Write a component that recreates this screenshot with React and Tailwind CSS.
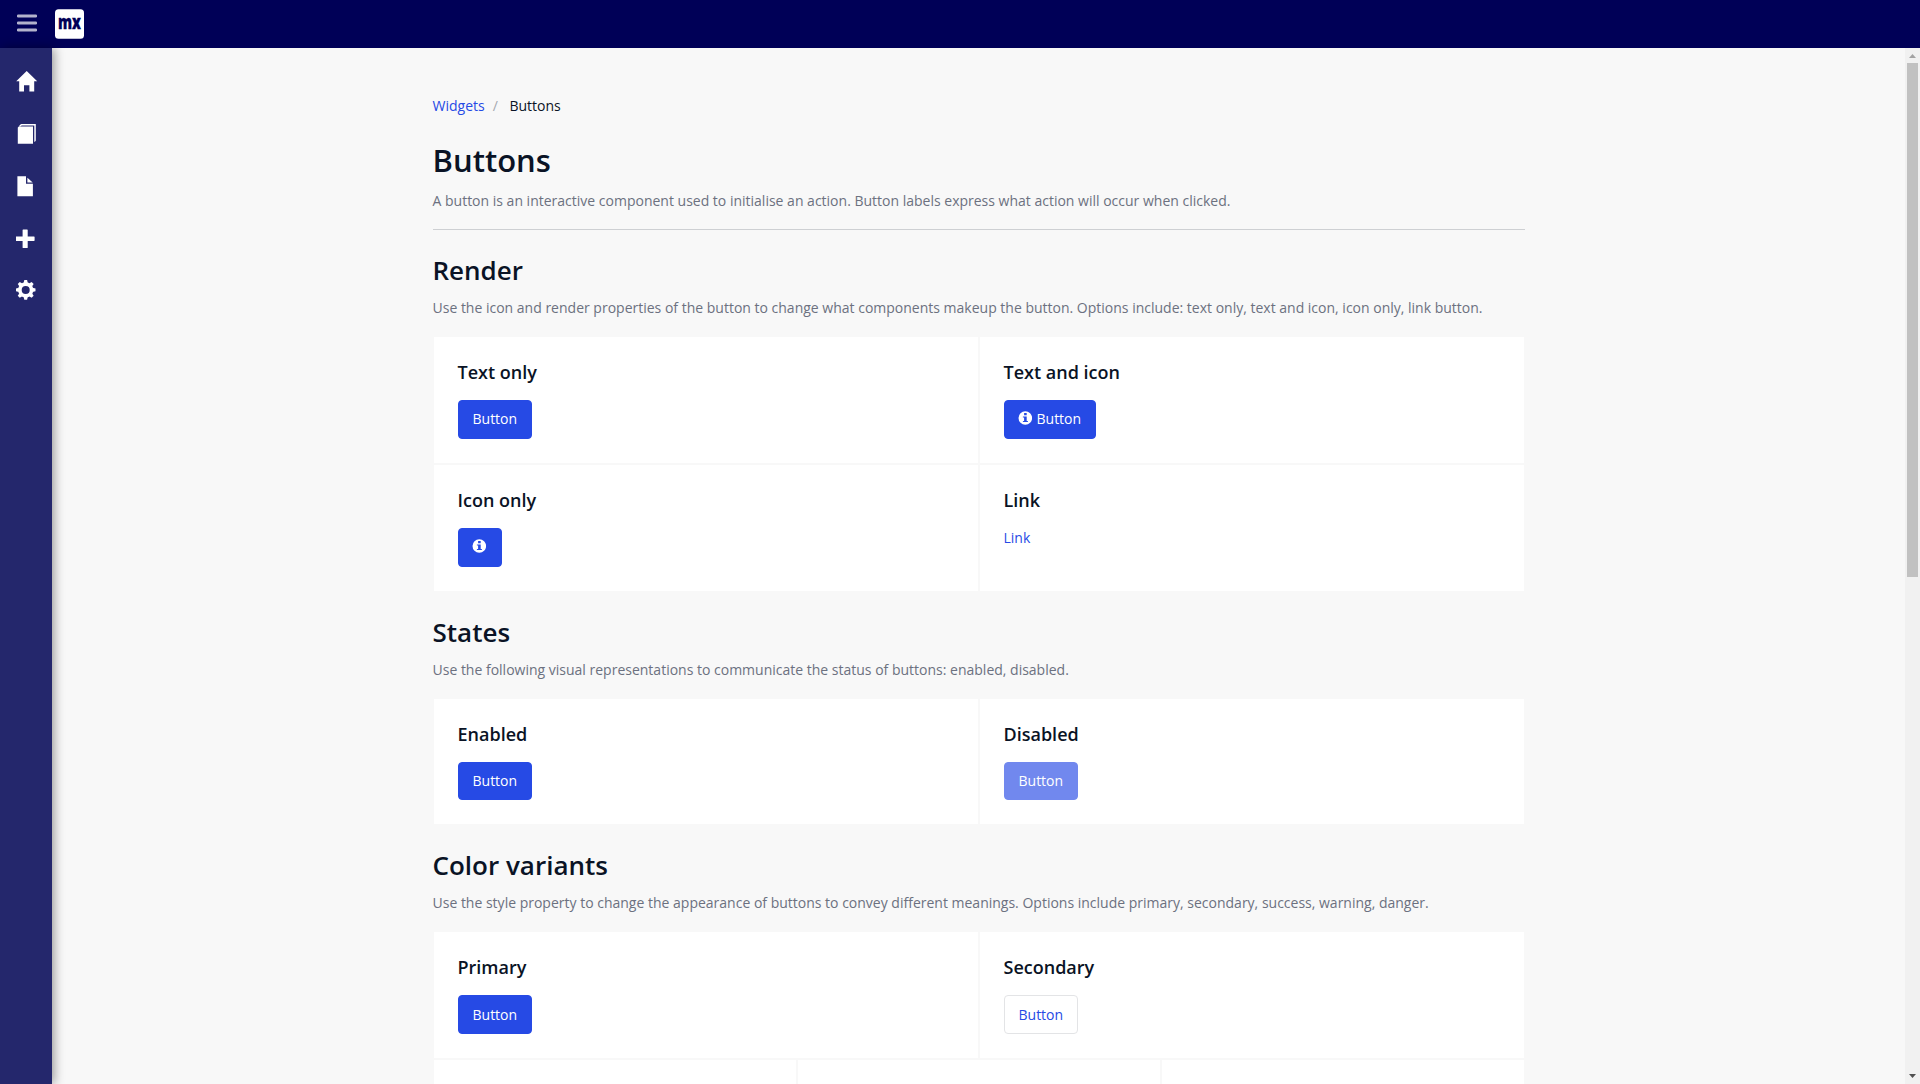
const navIcons = [
  {
    name: "Home",
    draw: <path d="M10.7 1 L21.2 11.3 H18.2 V21.5 H13.4 V15.3 H8 V21.5 H3.2 V11.3 H0.2 Z" />,
  },
  {
    name: "Book",
    draw: (
      <>
        <path d="M1.8 5.6 L3 4.5 H17 V21.7 H1.8 Z" />
        <path d="M2.6 4.6 L4.2 2.7 Q4.7 2.1 5.4 2.1 H19.8 V18.6 Q19.7 19.4 18.3 19.9 V3.4 H5.6 L4.5 4.6 Z" />
      </>
    ),
  },
  {
    name: "File",
    draw: (
      <>
        <path d="M1.4 1.3 H10 V8.8 H16.9 V21.3 H1.4 Z" />
        <path d="M11.4 2.8 L16.7 7.4 H11.4 Z" />
      </>
    ),
  },
  {
    name: "Add",
    draw: (
      <path d="M7.2 2.5 h3.9 q0.6 0 0.6 0.6 V9.4 H18 q0.6 0 0.6 0.6 v3.3 q0 0.6 -0.6 0.6 H11.7 V20.4 q0 0.6 -0.6 0.6 H7.2 q-0.6 0 -0.6 -0.6 V13.9 H0 V9.4 H6.6 V3.1 q0 -0.6 0.6 -0.6 Z" />
    ),
  },
  {
    name: "Settings",
    draw: (
      <g transform="translate(9.7 10.9)">
        <circle r="5.8" fill="none" stroke="currentColor" strokeWidth="3.6" />
        {[0, 45, 90, 135, 180, 225, 270, 315].map((a) => (
          <path key={a} transform={`rotate(${a})`} d="M-2.1 -6.8 L-1.4 -9.8 H1.4 L2.1 -6.8 Z" />
        ))}
      </g>
    ),
  },
];

function InfoIcon() {
  return (
    <svg
      viewBox="-0.3 0 14 14"
      className="-ml-[0.5px] mr-[0.5px] mb-[2.3px] block h-[14px] w-[14px] shrink-0"
      fill="currentColor"
    >
      <path
        fillRule="evenodd"
        d="M7 0.2a6.8 6.8 0 1 1 0 13.6A6.8 6.8 0 0 1 7 0.2ZM5.8 2.1v2.1h2.6V2.1ZM4.6 5.4v1h1.2v3.5H4.6v1.2h5V9.9H8.4V5.4Z"
      />
    </svg>
  );
}

function Button({ kind = "primary", children }) {
  const kinds = {
    primary: "border-[#264ae5] bg-[#264ae5] text-white",
    disabled: "border-[#264ae5] bg-[#264ae5] text-white opacity-65",
    secondary: "border-[#e3e4e6] bg-white text-[#264ae5]",
  };
  return (
    <button
      type="button"
      className={
        "flex h-[38.65px] items-center gap-1 rounded-[4px] border px-[14px] pb-[0.19px] text-sm leading-5 " + kinds[kind]
      }
    >
      {children}
    </button>
  );
}

function Cell({ title, children }) {
  return (
    <div className="flex h-[127.65px] flex-col items-start border border-[#f8f8f8] bg-white p-6">
      <h4 className="mb-[15.6px] text-lg font-semibold leading-[23.4px]">{title}</h4>
      {children}
    </div>
  );
}

function Section({ title, description, children }) {
  return (
    <section className="flex flex-col">
      <h2 className="mb-[9.4px] mt-6 text-[26px] font-semibold leading-[33.8px]">{title}</h2>
      <p className="mb-[16.95px] text-sm leading-[22px] text-[#6c7180]">{description}</p>
      {children}
    </section>
  );
}

export default function App() {
  return (
    <div className="flex h-[1084px] flex-col overflow-hidden bg-[#f8f8f8] font-['Open_Sans',sans-serif] text-sm text-[#0a1325]">
      <header className="flex h-12 shrink-0 items-center bg-[#000057]">
        <svg viewBox="0 0 20 48" className="ml-[17px] h-12 w-5" fill="#b2b2cc">
          <rect y="14.4" width="20" height="3.1" rx="1.2" />
          <rect y="21.4" width="20" height="3.1" rx="1.2" />
          <rect y="28.4" width="20" height="3.1" rx="1.2" />
        </svg>
        <svg viewBox="0 0 29 48" className="ml-[18px] h-12 w-[29px] overflow-visible">
          <rect y="9.2" width="29" height="29.5" rx="3.5" fill="#fff" />
          <text
            x="3"
            y="29.3"
            textLength="23"
            lengthAdjust="spacingAndGlyphs"
            fontFamily="Open Sans"
            fontWeight="800"
            fontSize="20"
            fill="#000057"
            stroke="#000057"
            strokeWidth="0.3"
          >
            mx
          </text>
        </svg>
      </header>
      <div className="flex min-h-0 flex-1">
        <nav className="z-10 flex w-[52px] shrink-0 flex-col gap-[30.3px] bg-[#24276c] pl-4 pt-[22px] text-white shadow-[2px_0_10px_rgba(0,0,0,0.4)]">
          {navIcons.map((item) => (
            <svg key={item.name} viewBox="0 0 22 22" className="h-[22px] w-[22px] shrink-0" fill="currentColor">
              {item.draw}
            </svg>
          ))}
        </nav>
        <main className="flex min-w-0 flex-1 justify-center overflow-hidden">
          <div className="w-[1092px]">
            <div className="mt-[47px] flex h-[22px] leading-[22px]">
              <span className="text-[#264ae5]">Widgets</span>
              <span className="ml-2 text-[#a5a8b0]">/</span>
              <span className="ml-[11.6px]">Buttons</span>
            </div>
            <h1 className="mt-[23px] text-[31px] font-semibold leading-[40px]">Buttons</h1>
            <p className="mt-2.5 leading-[22px] text-[#6c7180]">
              A button is an interactive component used to initialise an action. Button labels express what action will
              occur when clicked.
            </p>
            <div className="mb-[0.1px] mt-[17px] h-px bg-[#ced0d3]" />
            <Section
              title="Render"
              description="Use the icon and render properties of the button to change what components makeup the button. Options include: text only, text and icon, icon only, link button."
            >
              <div className="grid grid-cols-2">
                <Cell title="Text only">
                  <Button>Button</Button>
                </Cell>
                <Cell title="Text and icon">
                  <Button>
                    <InfoIcon />
                    Button
                  </Button>
                </Cell>
                <Cell title="Icon only">
                  <Button>
                    <InfoIcon />
                  </Button>
                </Cell>
                <Cell title="Link">
                  <span className="leading-5 text-[#264ae5]">Link</span>
                </Cell>
              </div>
            </Section>
            <Section
              title="States"
              description="Use the following visual representations to communicate the status of buttons: enabled, disabled."
            >
              <div className="grid grid-cols-2">
                <Cell title="Enabled">
                  <Button>Button</Button>
                </Cell>
                <Cell title="Disabled">
                  <Button kind="disabled">Button</Button>
                </Cell>
              </div>
            </Section>
            <Section
              title="Color variants"
              description="Use the style property to change the appearance of buttons to convey different meanings. Options include primary, secondary, success, warning, danger."
            >
              <div className="grid grid-cols-2">
                <Cell title="Primary">
                  <Button>Button</Button>
                </Cell>
                <Cell title="Secondary">
                  <Button kind="secondary">Button</Button>
                </Cell>
              </div>
              <div className="grid grid-cols-3">
                <Cell />
                <Cell />
                <Cell />
              </div>
            </Section>
          </div>
        </main>
        <div className="flex w-[15px] shrink-0 flex-col items-center bg-[#f1f1f1]">
          <svg viewBox="0 0 7 4" className="mt-1.5 h-1 w-[7px] shrink-0" fill="#a3a3a3">
            <path d="M3.5 0 L7 4 H0 Z" />
          </svg>
          <div className="mt-[5px] h-[514px] w-[11px] shrink-0 bg-[#c1c1c1]" />
          <svg viewBox="0 0 7 4" className="mb-1.5 mt-auto h-1 w-[7px] shrink-0" fill="#505050">
            <path d="M0 0 H7 L3.5 4 Z" />
          </svg>
        </div>
      </div>
    </div>
  );
}
